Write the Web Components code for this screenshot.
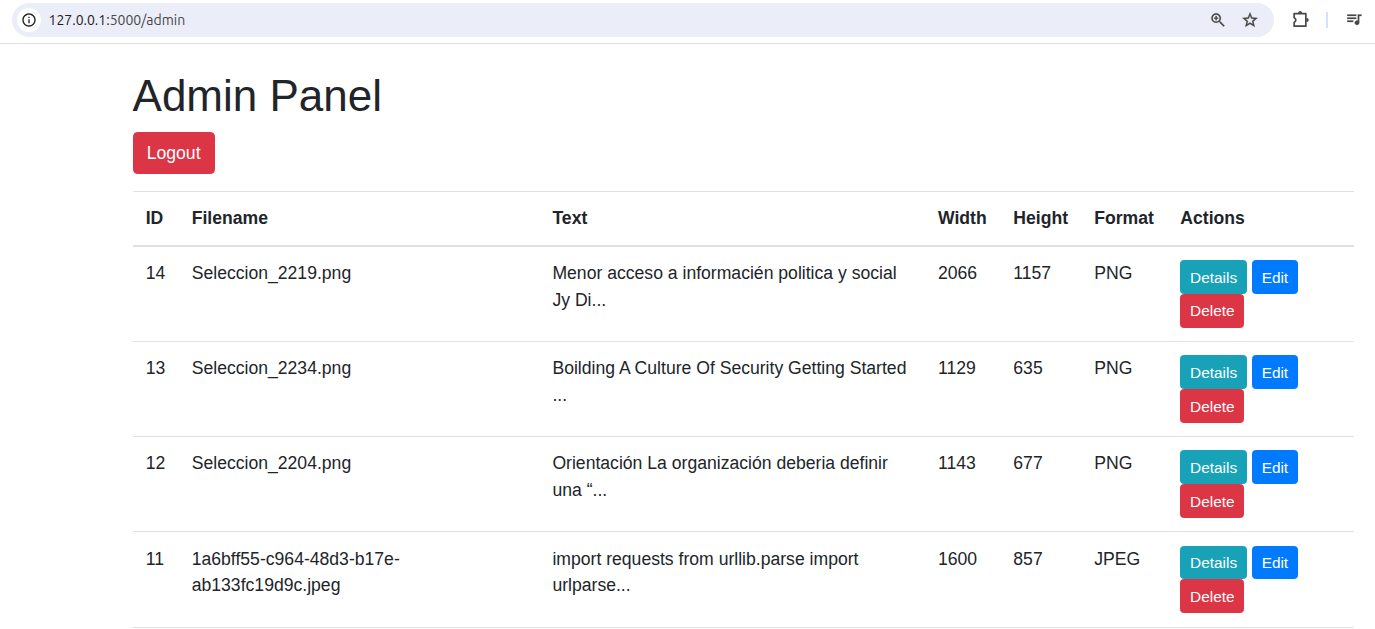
<!DOCTYPE html>
<html lang="en">
<head>
<meta charset="utf-8">
<title>Admin Panel</title>
<style>
html { font-size: 17.6px; }
body { margin: 0; height: 629px; overflow: hidden; background: #fff; color: #212529; font-family: "Liberation Sans", Arial, sans-serif; font-size: 1rem; line-height: 1.5; }
</style>
</head>
<body>
<browser-bar><span slot="host">127.0.0.1:</span><span slot="path">5000/admin</span></browser-bar>
<admin-page>
  <span slot="title">Admin Panel</span>
  <bs-button slot="tools" variant="danger">Logout</bs-button>
  <data-table></data-table>
</admin-page>
<script>
class BrowserBar extends HTMLElement {
  constructor() {
    super();
    this.attachShadow({ mode: "open" }).innerHTML = `
<style>
:host { display: flex; box-sizing: border-box; height: 44px; padding: 3px 12px 6px; border-bottom: 1px solid #dfe1e3; background: #fff; color: #474747; }
.field { display: flex; flex: none; align-items: center; box-sizing: border-box; width: 1262px; height: 34px; padding: 0 15px 0 5px; border-radius: 17px; background: #ebeef8; }
.info { display: flex; align-items: center; justify-content: center; width: 24px; height: 24px; border-radius: 50%; background: #fff; color: #1f1f1f; }
.url { flex: 1; margin-left: 7.500px; font: 14px/20px Ubuntu, "Noto Sans", sans-serif; letter-spacing: 0; color: #474747; white-space: nowrap; }
.host { color: #1f2023; }
svg { display: block; fill: currentColor; flex: none; }
.bold { stroke: currentColor; stroke-width: .5; }
.zoom { stroke-width: .15; }
.star { margin-left: 14px; }
.tools { display: flex; align-items: center; flex: none; height: 34px; margin-left: 17px; }
.sep { width: 2px; height: 16px; margin: 0 17px 0 15px; background: #d3e3fd; }
.music { margin-top: -2px; }
</style>
<div class="field">
  <div class="info"><svg width="16" height="16" viewBox="0 0 24 24"><path d="M11 17h2v-6h-2v6zm1-15C6.48 2 2 6.48 2 12s4.48 10 10 10 10-4.48 10-10S17.52 2 12 2zm0 18c-4.410 0-8-3.590-8-8s3.590-8 8-8 8 3.590 8 8-3.590 8-8 8zM11 9h2V7h-2v2z"/></svg></div>
  <div class="url"><span class="host"><slot name="host"></slot></span><slot name="path"></slot></div>
  <svg class="bold zoom" width="18" height="18" viewBox="0 0 24 24"><path d="M15.500 14h-.790l-.280-.270A6.471 6.471 0 0 0 16 9.500 6.500 6.500 0 1 0 9.500 16c1.610 0 3.090-.590 4.230-1.570l.270.280v.790l5.500 5.490L20.990 19.500l-5.490-5.500zm-6 0C7.010 14 5 11.990 5 9.500S7.010 5 9.500 5 14 7.010 14 9.500 11.990 14 9.500 14zM10.400 6.800H8.600v1.800H6.800v1.800h1.800v1.800h1.800v-1.800h1.800V8.600h-1.800z"/></svg>
  <svg class="star bold" width="18" height="18" viewBox="0 0 24 24"><path d="M22 9.240l-7.190-.620L12 2 9.190 8.630 2 9.240l5.460 4.730L5.820 21 12 17.270 18.180 21l-1.630-7.030L22 9.240zM12 15.400l-3.760 2.270 1-4.280-3.320-2.880 4.380-.380L12 6.100l1.710 4.040 4.380.380-3.320 2.880 1 4.280L12 15.400z"/></svg>
</div>
<div class="tools">
  <svg width="20" height="20" viewBox="0 0 20 20"><path fill="none" stroke="currentColor" stroke-width="1.700" stroke-linejoin="round" d="M3.150 3.550H14.850V16.150H3.150V12.200A2.300 2.300 0 0 0 3.150 7.800Z"/><path d="M7.200 3.200a1.900 2.200 0 0 1 3.800 0zM15.400 8a2.400 2 0 0 1 0 4z"/></svg>
  <div class="sep"></div>
  <svg class="music" width="18" height="18" viewBox="0 0 24 24"><path stroke="currentColor" stroke-width=".3" d="M15 6H3v2h12V6zm0 4H3v2h12v-2zM3 16h8v-2H3v2zM17 6v8.180c-.310-.110-.650-.180-1-.180-1.660 0-3 1.340-3 3s1.340 3 3 3 3-1.340 3-3V8h3V6h-5z"/></svg>
</div>`;
  }
}

class BsButton extends HTMLElement {
  constructor() {
    super();
    this.attachShadow({ mode: "open" }).innerHTML = `
<style>
:host { display: inline-block; box-sizing: border-box; vertical-align: middle; padding: .375rem .75rem; border: 1px solid var(--c); border-radius: .25rem; background: var(--c); color: #fff; font-size: 1rem; line-height: 1.5; white-space: nowrap; --c: #dc3545; }
:host([size=sm]) { padding: .25rem .5rem; border-radius: .2rem; font-size: .875rem; }
:host([variant=info]) { --c: #17a2b8; }
:host([variant=primary]) { --c: #007bff; }
</style><slot></slot>`;
  }
}

class AdminPage extends HTMLElement {
  constructor() {
    super();
    this.attachShadow({ mode: "open" }).innerHTML = `
<style>
:host { display: block; width: 1221.200px; margin: 1.5rem 0 0 132.550px; }
h1 { margin: 0 0 .5rem; font-size: 2.5rem; font-weight: 500; line-height: 1.2; }
.tools { display: flex; margin-bottom: 1rem; }
</style>
<h1><slot name="title"></slot></h1>
<div class="tools"><slot name="tools"></slot></div>
<slot></slot>`;
  }
}

class TableRow extends HTMLElement {
  connectedCallback() {
    const cells = this.cells;
    const root = this.attachShadow({ mode: "open" });
    root.innerHTML = `
<style>
:host { display: grid; grid-template-columns: 46px 360.700px 385.600px 75.300px 80.900px 86.100px 1fr; border-top: 1px solid #dee2e6; }
:host([head]) { border-bottom: 2px solid #dee2e6; font-weight: bold; }
:host([first]) { border-top: 0; }
div { padding: .75rem; min-width: 0; }
</style>` + cells.map(c => `<div>${c}</div>`).join("") + (this.hasAttribute("head") ? "" :
`<div><bs-button size="sm" variant="info">Details</bs-button> <bs-button size="sm" variant="primary">Edit</bs-button> <bs-button size="sm" variant="danger">Delete</bs-button></div>`);
  }
}

class DataTable extends HTMLElement {
  connectedCallback() {
    const root = this.attachShadow({ mode: "open" });
    root.innerHTML = `<style>:host { display: block; border-bottom: 1px solid #dee2e6; }</style>`;
    const rows = [
      ["ID", "Filename", "Text", "Width", "Height", "Format", "Actions"],
      ["14", "Seleccion_2219.png", "Menor acceso a informacién politica y social Jy Di...", "2066", "1157", "PNG"],
      ["13", "Seleccion_2234.png", "Boilding A Culture Of Security Getting Started ...", "1129", "635", "PNG"],
      ["12", "Seleccion_2204.png", "Orientación La organización deberia definir una “...", "1143", "677", "PNG"],
      ["11", "1a6bff55-c964-48d3-b17e-ab133fc19d9c.jpeg", "import requests from urllib.parse import urlparse...", "1600", "857", "JPEG"]
    ];
    rows.forEach((cells, i) => {
      const row = document.createElement("table-row");
      row.cells = cells;
      if (i === 0) row.setAttribute("head", "");
      if (i === 1) row.setAttribute("first", "");
      root.append(row);
    });
  }
}

customElements.define("browser-bar", BrowserBar);
customElements.define("bs-button", BsButton);
customElements.define("admin-page", AdminPage);
customElements.define("table-row", TableRow);
customElements.define("data-table", DataTable);
</script>
</body>
</html>
